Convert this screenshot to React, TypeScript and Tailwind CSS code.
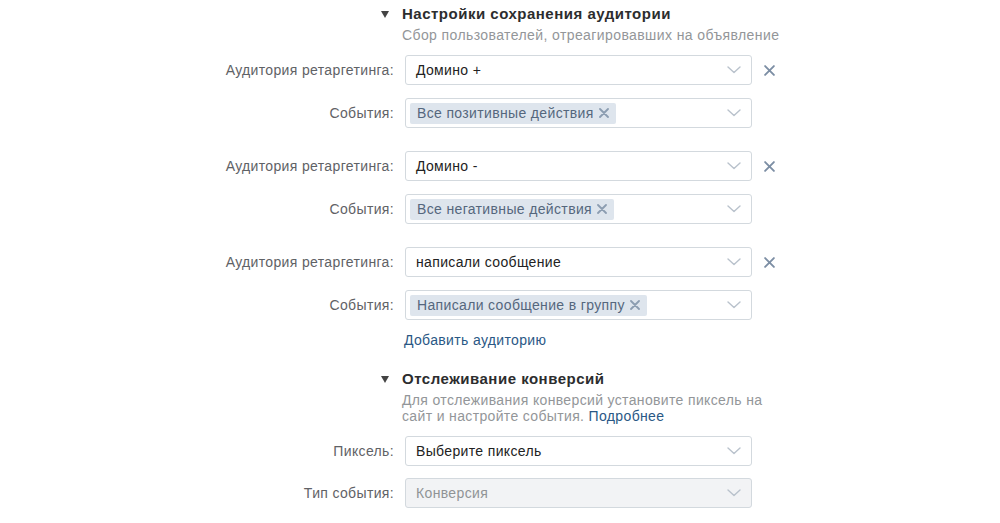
import React from "react";

const font = { fontFamily: '"Liberation Sans", Arial, sans-serif' };

function Chevron() {
  return (
    <svg width="14" height="8" viewBox="0 0 14 8" className="shrink-0">
      <path d="M1 1l6 5.5L13 1" fill="none" stroke="#b9c2cc" strokeWidth="1.4" strokeLinecap="round" strokeLinejoin="round" />
    </svg>
  );
}

function Cross({ size = 10, color = "#8192a6", w = 1.8 }: { size?: number; color?: string; w?: number }) {
  return (
    <svg width={size} height={size} viewBox="0 0 10 10" className="shrink-0">
      <path d="M1 1l8 8M9 1l-8 8" stroke={color} strokeWidth={w} strokeLinecap="round" />
    </svg>
  );
}

function Select({ children, disabled, chip }: { children: React.ReactNode; disabled?: boolean; chip?: boolean }) {
  return (
    <div
      className={`w-[347px] h-[30px] rounded-[3px] border border-[#d3d9de] flex items-center justify-between pr-[10px] ${
        chip ? "pl-[4px]" : "pl-[10px]"
      } ${disabled ? "bg-[#f2f3f5]" : "bg-white"}`}
    >
      {children}
      <Chevron />
    </div>
  );
}

function Chip({ text }: { text: string }) {
  return (
    <div className="h-[21px] rounded-[2px] bg-[#dee5ed] flex items-center pl-[7px] pr-[7px] gap-[5px] text-[14px] tracking-[0.35px] text-[#55677d]">
      <span>{text}</span>
      <Cross size={10} color="#8c9db1" w={1.8} />
    </div>
  );
}

function Row({ label, children, remove }: { label: string; children: React.ReactNode; remove?: boolean }) {
  return (
    <div className="flex items-center">
      <div className="w-[405px] pr-[11px] text-right text-[14px] tracking-[0.35px] text-[#5f6266]">{label}</div>
      {children}
      {remove && (
        <div className="ml-[12px] flex items-center">
          <Cross size={11} color="#7c8ea4" w={1.7} />
        </div>
      )}
    </div>
  );
}

function Group({ name, event }: { name: string; event: string }) {
  return (
    <div className="flex flex-col gap-[13px]">
      <Row label="Аудитория ретаргетинга:" remove>
        <Select>
          <span className="text-[14px] tracking-[0.35px] text-[#222]">{name}</span>
        </Select>
      </Row>
      <Row label="События:">
        <Select chip>
          <Chip text={event} />
        </Select>
      </Row>
    </div>
  );
}

function Header({ title }: { title: string }) {
  return (
    <div className="flex items-center h-[20px]">
      <div className="w-[402px] flex justify-end pr-[13px]">
        <svg width="8" height="7" viewBox="0 0 8 7">
          <path d="M0 0h8L4 7z" fill="#444" />
        </svg>
      </div>
      <div className="text-[15px] tracking-[0.5px] font-bold text-[#2c2d2e]">{title}</div>
    </div>
  );
}

export default function App() {
  return (
    <div className="w-[1000px] h-[523px] bg-white overflow-hidden pt-[4px]" style={font}>
      <Header title="Настройки сохранения аудитории" />
      <div className="pl-[402px] mt-[2px] leading-[18px] text-[14px] tracking-[0.4px] text-[#939699]">
        Сбор пользователей, отреагировавших на объявление
      </div>
      <div className="mt-[11px] flex flex-col gap-[23px]">
        <Group name="Домино +" event="Все позитивные действия" />
        <Group name="Домино -" event="Все негативные действия" />
        <Group name="написали сообщение" event="Написали сообщение в группу" />
      </div>
      <div className="pl-[404px] mt-[11px] leading-[18px] text-[14px] tracking-[0.35px] text-[#2a5885]">Добавить аудиторию</div>
      <div className="mt-[20px]">
        <Header title="Отслеживание конверсий" />
      </div>
      <div className="ml-[402px] mt-[3px] w-[380px] leading-[16px] text-[14px] tracking-[0.35px] text-[#939699]">
        Для отслеживания конверсий установите пиксель на сайт и настройте события.{" "}
        <span className="text-[#2a5885]">Подробнее</span>
      </div>
      <div className="mt-[12px] flex flex-col gap-[12px]">
        <Row label="Пиксель:">
          <Select>
            <span className="text-[14px] tracking-[0.35px] text-[#222]">Выберите пиксель</span>
          </Select>
        </Row>
        <Row label="Тип события:">
          <Select disabled>
            <span className="text-[14px] tracking-[0.35px] text-[#909396]">Конверсия</span>
          </Select>
        </Row>
      </div>
    </div>
  );
}
